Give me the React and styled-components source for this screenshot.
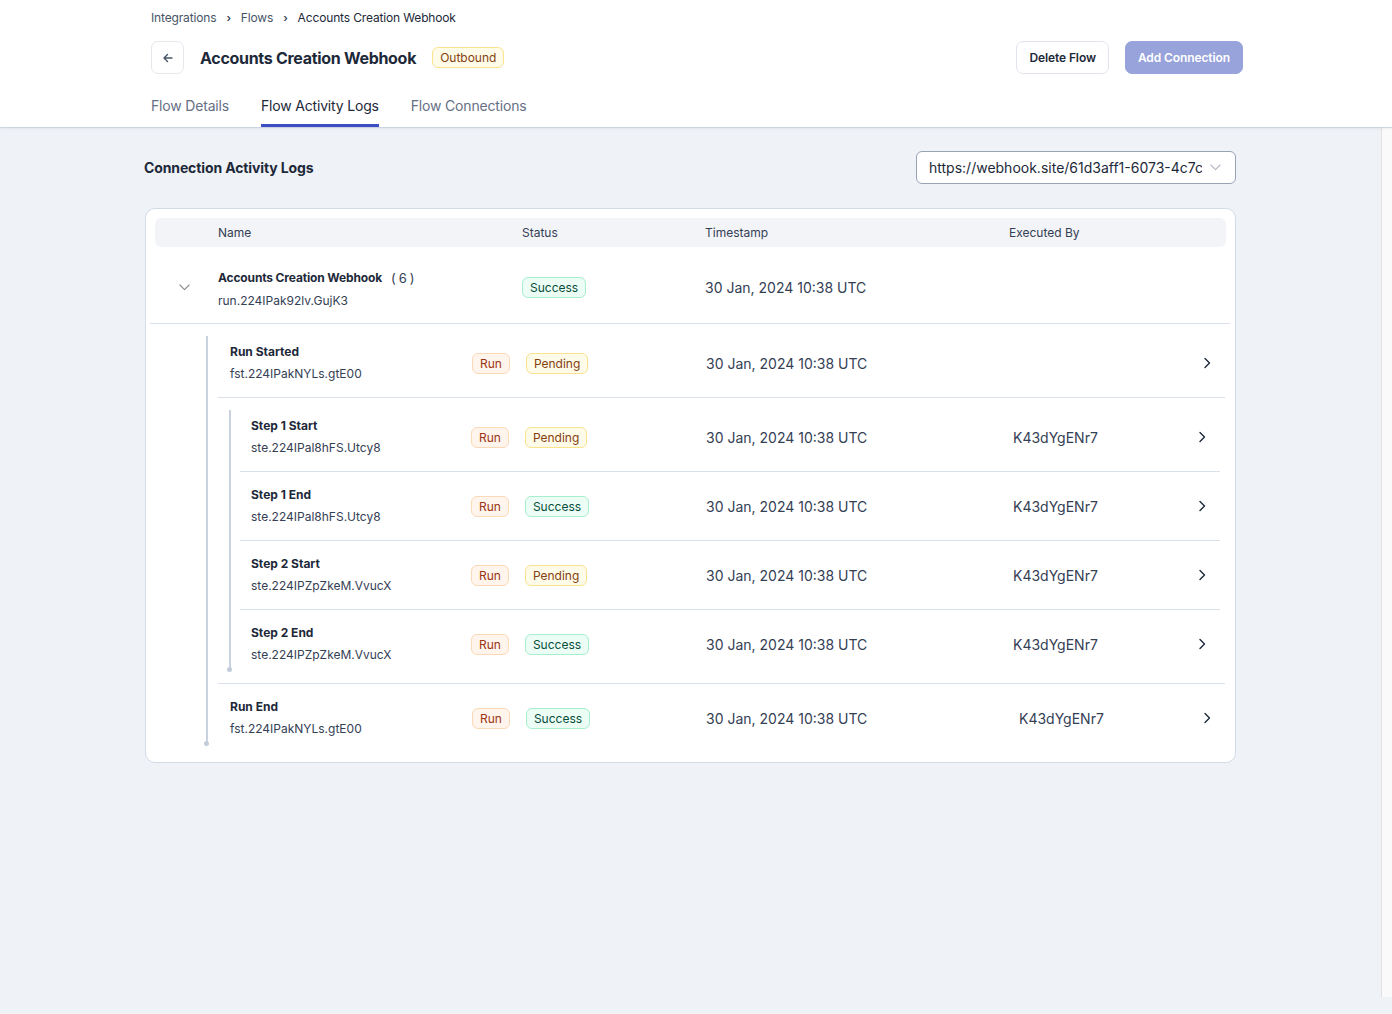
import React from "react";
import styled, { createGlobalStyle } from "styled-components";

const Global = createGlobalStyle`
  * { box-sizing: border-box; }
  html, body { margin: 0; padding: 0; }
  body {
    font-family: Inter, "Noto Sans", "Liberation Sans", sans-serif;
    background: #eff2f7;
    color: #1d2939;
    -webkit-font-smoothing: antialiased;
  }
`;

const Page = styled.div`
  width: 1392px;
  min-height: 1014px;
  background: #eff2f7;
  display: flex;
  flex-direction: column;
`;

const HeaderBar = styled.header`
  background: #fff;
  box-shadow: 0 1px 3px rgba(16, 24, 40, 0.1), 0 1px 0 #dbe2ec;
  position: relative;
  z-index: 1;
`;

const HeaderInner = styled.div`
  width: 1092px;
  margin-left: 151px;
  display: flex;
  flex-direction: column;
`;

const Crumbs = styled.nav`
  display: flex;
  align-items: center;
  gap: 10px;
  padding-top: 10px;
  height: 26px;
  font-size: 12px;
  line-height: 16px;
  letter-spacing: -0.15px;
`;

const Crumb = styled.span`
  color: ${(p) => (p.$current ? "#1d2939" : "#475467")};
`;

const Sep = styled.span`
  color: #344054;
  font-size: 11px;
  font-weight: 600;
`;

const TitleRow = styled.div`
  margin-top: 15px;
  display: flex;
  align-items: center;
  height: 33px;
`;

const BackButton = styled.button`
  width: 33px;
  height: 33px;
  border: 1px solid #e4e7ec;
  border-radius: 7px;
  background: #fff;
  display: flex;
  align-items: center;
  justify-content: center;
  color: #475467;
  padding: 0;
`;

const Title = styled.h1`
  margin: 0 16px 0 16px;
  font-size: 16px;
  font-weight: 700;
  color: #1d2939;
  letter-spacing: -0.3px;
`;

const Badge = styled.span`
  display: inline-flex;
  align-items: center;
  height: 21px;
  padding: 0 7px;
  border-radius: 6px;
  font-size: 12px;
  border: 1px solid ${(p) => p.$tone.border};
  background: ${(p) => p.$tone.bg};
  color: ${(p) => p.$tone.fg};
  white-space: nowrap;
`;

const tones = {
  warn: { bg: "#fefbe8", border: "#fbe38e", fg: "#854010" },
  run: { bg: "#fff5ec", border: "#fcd9b6", fg: "#9a3412" },
  success: { bg: "#ecfdf5", border: "#a6efce", fg: "#064e3b" },
};

const Spacer = styled.div`
  flex: 1;
`;

const Actions = styled.div`
  display: flex;
  align-items: center;
  gap: 16px;
`;

const Button = styled.button`
  height: 33px;
  padding: 0 12px;
  border-radius: 7px;
  font-family: inherit;
  font-size: 12px;
  font-weight: 600;
  letter-spacing: -0.1px;
  border: 1px solid ${(p) => (p.$primary ? "#97a3da" : "#e1e5ec")};
  background: ${(p) => (p.$primary ? "#97a3da" : "#fff")};
  color: ${(p) => (p.$primary ? "#fff" : "#1d2939")};
`;

const Tabs = styled.div`
  display: flex;
  gap: 32px;
  margin-top: 22px;
`;

const Tab = styled.div`
  font-size: 14px;
  line-height: 20px;
  letter-spacing: -0.18px;
  padding-bottom: 8px;
  border-bottom: 3px solid ${(p) => (p.$active ? "#3d4ec4" : "transparent")};
  color: ${(p) => (p.$active ? "#1d2939" : "#667085")};
`;

const Body = styled.div`
  display: flex;
  flex: 1;
`;

const Main = styled.main`
  flex: 1;
  padding-top: 24px;
`;

const Content = styled.div`
  width: 1092px;
  margin-left: 144px;
`;

const Track = styled.div`
  width: 11px;
  height: 870px;
  background: #fafafa;
  border-left: 1px solid #e2e2e2;
`;

const Toolbar = styled.div`
  display: flex;
  align-items: center;
  justify-content: space-between;
`;

const SectionTitle = styled.h2`
  margin: 0;
  font-size: 14px;
  font-weight: 700;
  letter-spacing: -0.12px;
  color: #1d2939;
`;

const Select = styled.div`
  width: 320px;
  height: 33px;
  border: 1px solid #98a2b3;
  border-radius: 6px;
  background: #fff;
  display: flex;
  align-items: center;
  padding: 0 14px 0 12px;
  font-size: 14px;
  color: #1d2939;
  gap: 8px;
`;

const SelectText = styled.span`
  flex: 1;
  white-space: nowrap;
  overflow: hidden;
`;

const Card = styled.section`
  margin-top: 24px;
  margin-left: 1px;
  background: #fff;
  border: 1px solid #d3dbe7;
  border-radius: 10px;
  padding: 9px 5px 5px 4px;
`;

const HeadRow = styled.div`
  margin: 0 4px 0 5px;
  height: 29px;
  background: #f2f4f7;
  border-radius: 6px;
  display: grid;
  grid-template-columns: 63px 304px 183px 304px 1fr;
  align-items: center;
  font-size: 12px;
  color: #344054;
`;

const ParentRow = styled.div`
  height: 77px;
  border-bottom: 1px solid #d9e0ea;
  display: grid;
  grid-template-columns: 68px 304px 183px 304px 1fr;
  align-items: center;
  padding-top: 8px;
`;

const Toggle = styled.div`
  display: flex;
  justify-content: center;
  color: #8c8c8c;
  margin-top: -3px;
`;

const NameBlock = styled.div`
  display: flex;
  flex-direction: column;
  gap: ${(p) => (p.$wide ? 7 : 6)}px;
`;

const Name = styled.div`
  font-size: 12px;
  line-height: 16px;
  font-weight: 700;
  color: #1d2939;
  display: flex;
  align-items: center;
  letter-spacing: ${(p) => (p.$tight ? "-0.15px" : "0")};
`;

const Count = styled.span`
  font-size: 13px;
  font-weight: 400;
  letter-spacing: 3px;
  margin-left: 9px;
  color: #344054;
`;

const Id = styled.div`
  font-size: 12px;
  line-height: 16px;
  color: #344054;
`;

const Cell = styled.div`
  font-size: 14px;
  color: #344054;
  display: flex;
  align-items: center;
  gap: 16px;
  margin-top: ${(p) => p.$lift || 0}px;
`;

const Group = styled.div`
  position: relative;
  padding: 5px 0 5px ${(p) => p.$pad || 0}px;
  margin: 0 ${(p) => p.$right || 0}px 0 ${(p) => p.$indent || 0}px;
  border-bottom: ${(p) => (p.$divider ? "1px solid #d9e0ea" : "none")};

  &::before {
    content: "";
    position: absolute;
    left: ${(p) => p.$line}px;
    top: 12px;
    bottom: 15px;
    width: 1.5px;
    background: #c9d2df;
  }
  &::after {
    content: "";
    position: absolute;
    left: ${(p) => p.$line - 2}px;
    bottom: 11px;
    width: 5px;
    height: 5px;
    border-radius: 50%;
    background: #c2ccda;
  }
`;

const Row = styled.div`
  height: 68px;
  display: grid;
  grid-template-columns: ${(p) => p.$cols} 1fr 16px;
  align-items: center;
  padding: 0 10px 0 ${(p) => p.$pad}px;
  margin-right: ${(p) => p.$right || 0}px;
  border-bottom: ${(p) => (p.$divider ? "1px solid #d9e0ea" : "none")};
  box-sizing: content-box;
`;

const Chevron = styled.div`
  display: flex;
  justify-content: center;
  color: #1d2939;
`;

const ChevronRight = () => (
  <svg width="8" height="12" viewBox="0 0 8 12" fill="none">
    <path d="M2 1.5 6.5 6 2 10.5" stroke="currentColor" strokeWidth="1.4" strokeLinecap="round" strokeLinejoin="round" />
  </svg>
);

const ChevronDown = ({ color = "currentColor", w = 12 }) => (
  <svg width={w} height={w * 0.6} viewBox="0 0 12 7" fill="none">
    <path d="M1 1 6 6 11 1" stroke={color} strokeWidth="1.2" strokeLinecap="round" strokeLinejoin="round" />
  </svg>
);

const ArrowLeft = () => (
  <svg width="12" height="12" viewBox="0 0 12 12" fill="none">
    <path d="M10 6H2M5.5 2.5 2 6l3.5 3.5" stroke="currentColor" strokeWidth="1.4" strokeLinecap="round" strokeLinejoin="round" />
  </svg>
);

const TS = "30 Jan, 2024 10:38 UTC";

const steps = [
  { name: "Step 1 Start", id: "ste.224IPal8hFS.Utcy8", status: "Pending" },
  { name: "Step 1 End", id: "ste.224IPal8hFS.Utcy8", status: "Success" },
  { name: "Step 2 Start", id: "ste.224IPZpZkeM.VvucX", status: "Pending" },
  { name: "Step 2 End", id: "ste.224IPZpZkeM.VvucX", status: "Success" },
];

const RUN_COLS = "242px 234px 313px";
const STEP_COLS = "220px 235px 307px";

function LogRow({ name, id, status, by, cols, pad, right, divider }) {
  return (
    <Row $cols={cols} $pad={pad} $right={right} $divider={divider}>
      <NameBlock>
        <Name>{name}</Name>
        <Id>{id}</Id>
      </NameBlock>
      <Cell>
        <Badge $tone={tones.run}>Run</Badge>
        <Badge $tone={status === "Success" ? tones.success : tones.warn}>{status}</Badge>
      </Cell>
      <Cell>{TS}</Cell>
      <Cell>{by}</Cell>
      <Chevron>
        <ChevronRight />
      </Chevron>
    </Row>
  );
}

export default function App() {
  return (
    <>
      <Global />
      <Page>
        <HeaderBar>
          <HeaderInner>
            <Crumbs>
              <Crumb>Integrations</Crumb>
              <Sep>›</Sep>
              <Crumb>Flows</Crumb>
              <Sep>›</Sep>
              <Crumb $current>Accounts Creation Webhook</Crumb>
            </Crumbs>
            <TitleRow>
              <BackButton aria-label="Back">
                <ArrowLeft />
              </BackButton>
              <Title>Accounts Creation Webhook</Title>
              <Badge $tone={tones.warn}>Outbound</Badge>
              <Spacer />
              <Actions>
                <Button>Delete Flow</Button>
                <Button $primary>Add Connection</Button>
              </Actions>
            </TitleRow>
            <Tabs>
              <Tab>Flow Details</Tab>
              <Tab $active>Flow Activity Logs</Tab>
              <Tab>Flow Connections</Tab>
            </Tabs>
          </HeaderInner>
        </HeaderBar>
        <Body>
          <Main>
            <Content>
              <Toolbar>
                <SectionTitle>Connection Activity Logs</SectionTitle>
                <Select>
                  <SelectText>https://webhook.site/61d3aff1-6073-4c7c</SelectText>
                  <ChevronDown color="#b0b7c3" w={11} />
                </Select>
              </Toolbar>
              <Card>
                <HeadRow>
                  <span />
                  <span>Name</span>
                  <span>Status</span>
                  <span>Timestamp</span>
                  <span>Executed By</span>
                </HeadRow>
                <ParentRow>
                  <Toggle>
                    <ChevronDown color="#8c8c8c" w={11} />
                  </Toggle>
                  <NameBlock $wide>
                    <Name $tight>
                      Accounts Creation Webhook<Count>(6)</Count>
                    </Name>
                    <Id>run.224IPak92lv.GujK3</Id>
                  </NameBlock>
                  <Cell $lift={-4}>
                    <Badge $tone={tones.success}>Success</Badge>
                  </Cell>
                  <Cell $lift={-4}>{TS}</Cell>
                  <Cell />
                </ParentRow>
                <Group $indent={68} $right={5} $line={-12}>
                  <LogRow
                    name="Run Started"
                    id="fst.224IPakNYLs.gtE00"
                    status="Pending"
                    by=""
                    cols={RUN_COLS}
                    pad={12}
                    divider
                  />
                  <Group $pad={22} $line={11} $divider>
                    {steps.map((s, i) => (
                      <LogRow
                        key={s.name}
                        {...s}
                        by="K43dYgENr7"
                        cols={STEP_COLS}
                        pad={11}
                        right={5}
                        divider={i < steps.length - 1}
                      />
                    ))}
                  </Group>
                  <LogRow
                    name="Run End"
                    id="fst.224IPakNYLs.gtE00"
                    status="Success"
                    by="K43dYgENr7"
                    cols={RUN_COLS}
                    pad={12}
                  />
                </Group>
              </Card>
            </Content>
          </Main>
          <Track />
        </Body>
      </Page>
    </>
  );
}
